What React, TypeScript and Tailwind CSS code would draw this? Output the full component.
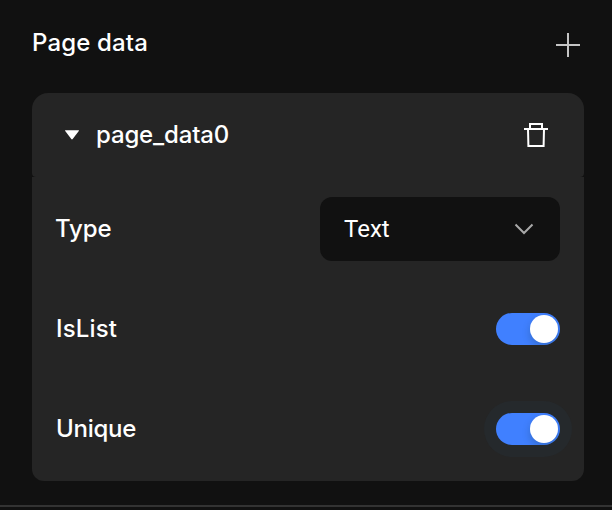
import { useState } from "react";

const labelFont =
  "font-['Inter','Liberation_Sans',sans-serif] font-medium text-[24px] leading-8 text-white whitespace-nowrap";

function Toggle({ focused = false, label }: { focused?: boolean; label: string }) {
  const [on, setOn] = useState(true);
  return (
    <button
      role="switch"
      aria-checked={on}
      aria-label={label}
      onClick={() => setOn(!on)}
      className={`flex h-8 w-16 items-center overflow-hidden rounded-full px-0.5 ${on ? "justify-end bg-[#4080ff]" : "justify-start bg-[#555555]"} ${focused ? "shadow-[0_0_0_12px_#25292c]" : ""}`}
    >
      <span className="size-7 rounded-full bg-white shadow-[0_4px_8px_rgba(0,35,11,0.2)]" />
    </button>
  );
}

export default function App() {
  return (
    <div className="flex h-[510px] w-[612px] flex-col overflow-hidden bg-[#111111]">
      <header className="flex h-[93px] shrink-0 items-start justify-between pr-7 pl-8">
        <h1 className={`${labelFont} mt-[27px] tracking-[0.15px]`}>Page data</h1>
        <button aria-label="Add" className="mt-[29px]">
          <svg width="32" height="32" viewBox="0 0 32 32" fill="none" stroke="#c5c5c5" strokeWidth="2">
            <path d="M16 4v24M4 16h24" />
          </svg>
        </button>
      </header>

      <section className="mr-7 ml-8 flex h-[388px] shrink-0 flex-col">
        <div className="flex h-[84px] items-center rounded-t-2xl rounded-b-[4px] bg-[#252525] px-8">
          <svg width="16" height="16" viewBox="0 0 16 16" fill="#ffffff">
            <path d="M1.6 3.2h12.8c.6 0 .7.5.4.9L8.7 12c-.4.5-1 .5-1.4 0L1.2 4.1c-.3-.4-.2-.9.4-.9z" />
          </svg>
          <span className={`${labelFont} ml-4 tracking-[-0.15px]`}>page_data0</span>
          <button aria-label="Delete" className="ml-auto">
            <svg width="32" height="32" viewBox="0 0 32 32" fill="none" stroke="#ffffff" strokeWidth="2">
              <path d="M4 10h24M10 10V5h12v5M8 10l.4 17h15.2L24 10" />
            </svg>
          </button>
        </div>

        <div className="flex flex-1 flex-col rounded-b-xl bg-[#252525] px-6 pt-5">
          <div className="flex h-16 items-center justify-between">
            <span className={`${labelFont} -ml-px tracking-[-0.1px]`}>Type</span>
            <button className="flex h-16 w-60 items-center justify-between rounded-xl bg-[#111111] px-6 font-['Roboto',sans-serif] text-[24px] leading-8 text-white">
              <span>Text</span>
              <svg width="24" height="24" viewBox="0 0 24 24" fill="none" stroke="#a9a9a9" strokeWidth="2">
                <path d="M3.5 7.5l8.5 8.5 8.5-8.5" />
              </svg>
            </button>
          </div>
          <div className="mt-9 flex h-16 items-center justify-between">
            <span className={`${labelFont} tracking-[0.15px]`}>IsList</span>
            <Toggle label="IsList" />
          </div>
          <div className="mt-9 flex h-16 items-center justify-between">
            <span className={`${labelFont} tracking-[-0.25px]`}>Unique</span>
            <Toggle label="Unique" focused />
          </div>
        </div>
      </section>

      <div className="mt-6 h-0.5 shrink-0 bg-[#333333]" />
    </div>
  );
}
